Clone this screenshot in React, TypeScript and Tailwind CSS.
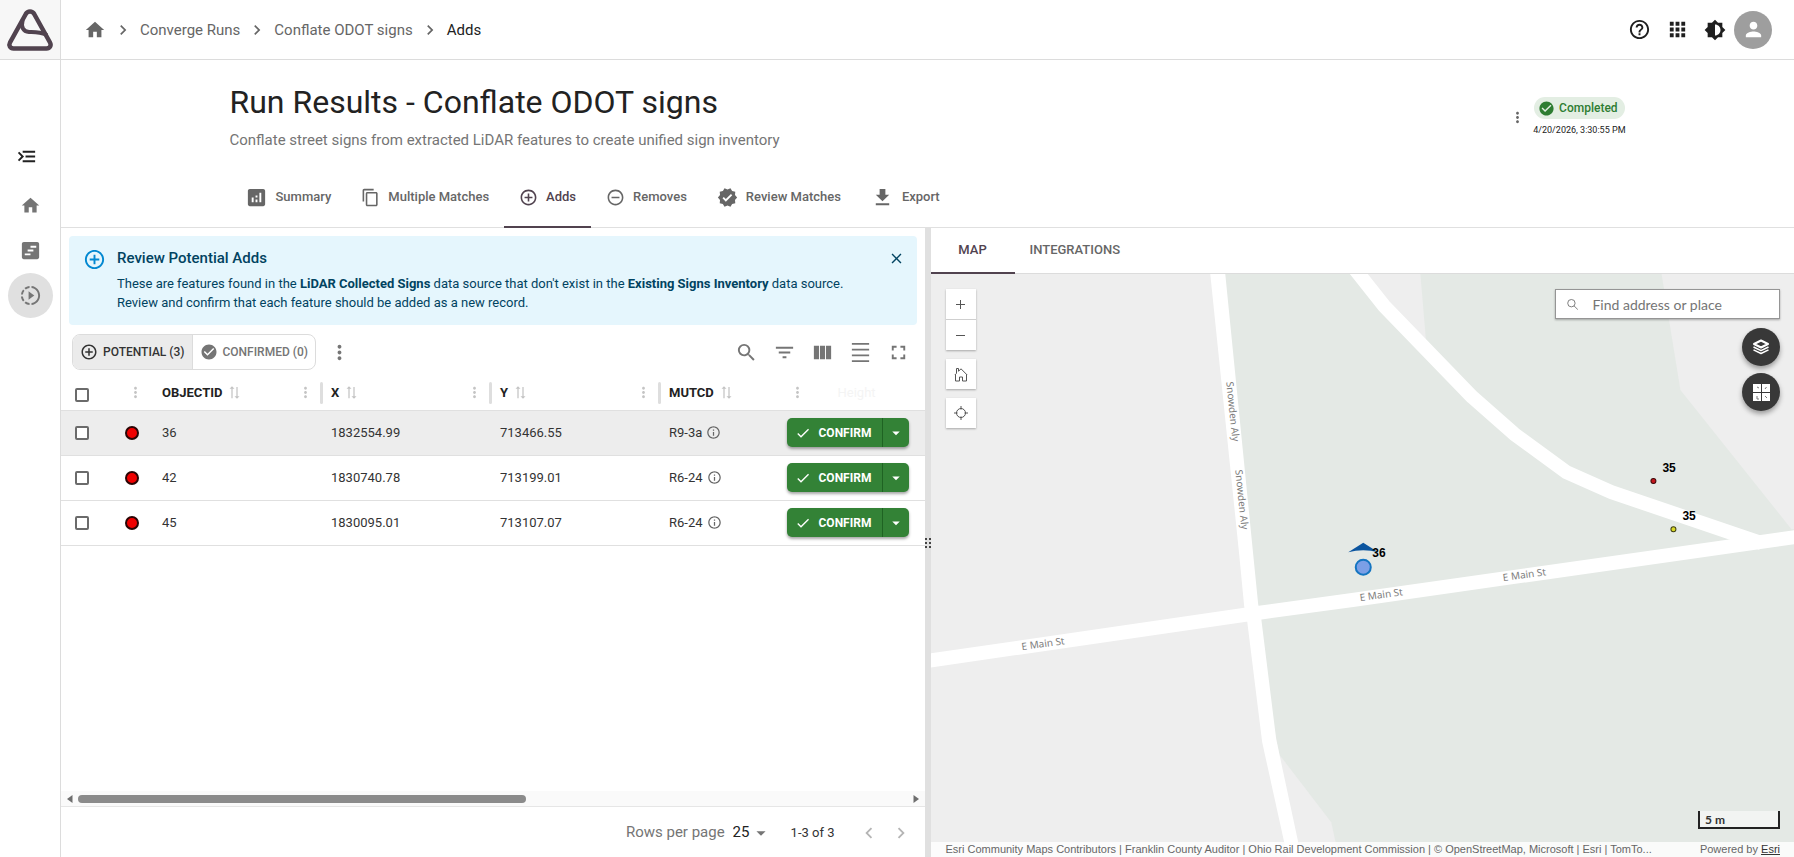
import React from 'react';
import {
  MdAddCircleOutline,
  MdAnalytics,
  MdApps,
  MdArrowDropDown,
  MdBrightness6,
  MdCheck,
  MdCheckCircle,
  MdChevronLeft,
  MdChevronRight,
  MdClose,
  MdContentCopy,
  MdDensitySmall,
  MdDownload,
  MdFilterList,
  MdFullscreen,
  MdHelpOutline,
  MdHome,
  MdInfoOutline,
  MdMenuOpen,
  MdMoreVert,
  MdPerson,
  MdRemoveCircleOutline,
  MdSearch,
  MdSlowMotionVideo,
  MdSyncAlt,
  MdVerified,
  MdViewColumn,
  MdViewTimeline,
} from 'react-icons/md';

const rows = [
  { id: '36', x: '1832554.99', y: '713466.55', mutcd: 'R9-3a' },
  { id: '42', x: '1830740.78', y: '713199.01', mutcd: 'R6-24' },
  { id: '45', x: '1830095.01', y: '713107.07', mutcd: 'R6-24' },
];

const tabs = [
  { label: 'Summary', icon: MdAnalytics, size: 23 },
  { label: 'Multiple Matches', icon: MdContentCopy, size: 19 },
  { label: 'Adds', icon: MdAddCircleOutline, size: 19 },
  { label: 'Removes', icon: MdRemoveCircleOutline, size: 19 },
  { label: 'Review Matches', icon: MdVerified, size: 21 },
  { label: 'Export', icon: MdDownload, size: 23 },
];

const Logo = () => (
  <svg width="48" height="44" viewBox="0 0 48 44" fill="none" stroke="#51434f" strokeWidth="4.500" strokeLinejoin="round" strokeLinecap="round">
    <path d="M19.800 6c1.900-3.200 6.500-3.200 8.400 0L44 34.500c1.600 3-.2 6-3.500 6h-33c-3.300 0-5.100-3-3.500-6z" />
    <path d="M16.500 13c-1.500 6 .5 10.500 6.500 11 6 .3 11 .2 17 2.500" strokeWidth="4" />
  </svg>
);

const Sidebar = () => (
  <aside className="flex w-[61px] shrink-0 flex-col border-r border-[#dcdcdc] bg-white">
    <a href="#" aria-label="Aurora home" className="flex h-[60px] items-center justify-center border-b border-[#dcdcdc] bg-[#f7f7f7]">
      <Logo />
    </a>
    <nav className="mt-[74px] flex flex-col items-center text-[#757575]">
      <button aria-label="Expand menu" className="mb-[4px] flex h-[45px] w-[53px] items-center justify-center self-start text-[#222]">
        <MdMenuOpen size={23} className="-scale-x-100" />
      </button>
      <a href="#" aria-label="Home" className="flex size-[45px] items-center justify-center">
        <MdHome size={21} />
      </a>
      <a href="#" aria-label="Timeline" className="flex size-[45px] items-center justify-center">
        <MdViewTimeline size={23} />
      </a>
      <a href="#" aria-label="Runs" className="flex size-[45px] items-center justify-center rounded-full bg-[#e0e0e0]">
        <MdSlowMotionVideo size={23} />
      </a>
    </nav>
  </aside>
);

const TopBar = () => (
  <header className="flex h-[60px] shrink-0 items-center justify-between border-b border-[#dcdcdc] pr-[22px] pl-[23px]">
    <nav aria-label="Breadcrumb" className="flex items-center pt-px text-[15px] text-[#666]">
      <a href="#" aria-label="Home">
        <MdHome size={22} />
      </a>
      <MdChevronRight size={20} className="mx-[7px]" />
      <a href="#">Converge Runs</a>
      <MdChevronRight size={20} className="mx-[7px]" />
      <a href="#">Conflate ODOT signs</a>
      <MdChevronRight size={20} className="mx-[7px]" />
      <span className="text-[#222]">Adds</span>
    </nav>
    <div className="flex items-center text-[#1f1f1f]">
      <button aria-label="Help" className="flex w-[38px] justify-center">
        <MdHelpOutline size={23} />
      </button>
      <button aria-label="Apps" className="flex w-[38px] justify-center">
        <MdApps size={23} />
      </button>
      <button aria-label="Toggle theme" className="flex w-[38px] justify-center">
        <MdBrightness6 size={22} />
      </button>
      <button aria-label="Account" className="flex size-[38px] items-center justify-center rounded-full bg-[#9e9e9e] text-white">
        <MdPerson size={23} />
      </button>
    </div>
  </header>
);

const RunHeader = () => (
  <section className="shrink-0 border-b border-[#e0e0e0]">
    <div className="mx-auto max-w-[1396px]">
      <div className="flex justify-between pt-[22px]">
        <div>
          <h1 className="text-[32px] leading-[40px] text-[#222]">Run Results - Conflate ODOT signs</h1>
          <p className="mt-[6px] text-[15px] leading-[24px] text-[#757575]">
            Conflate street signs from extracted LiDAR features to create unified sign inventory
          </p>
        </div>
        <div className="flex items-center gap-[7px] self-start pt-[15px]">
          <button aria-label="Run actions" className="text-[#666]">
            <MdMoreVert size={17} />
          </button>
          <div className="flex flex-col items-center">
            <span className="flex h-[22px] items-center gap-[4px] rounded-full bg-[#e3eee3] pr-[7px] pl-[4px] text-[12px] font-medium text-[#2e7d32]">
              <MdCheckCircle size={17} />
              Completed
            </span>
            <time className="mt-[3px] text-[9px] leading-[16px] text-[#222]">4/20/2026, 3:30:55 PM</time>
          </div>
        </div>
      </div>
      <div role="tablist" className="mt-[16px] -mb-px flex h-[60px]">
        {tabs.map(({ label, icon: Icon, size }) => (
          <button
            key={label}
            role="tab"
            aria-selected={label === 'Adds'}
            className={`flex items-center gap-[8px] border-b-2 px-[15px] text-[13px] font-medium ${
              label === 'Adds' ? 'border-[#51434f] text-[#51434f]' : 'border-transparent text-[#666]'
            }`}
          >
            <Icon size={size} />
            {label}
          </button>
        ))}
      </div>
    </div>
  </section>
);

const ReviewAlert = () => (
  <div role="status" className="mx-[8px] mt-[8px] flex rounded-[4px] bg-[#e5f6fd] pt-[11px] pr-[12px] pb-[13px] pl-[14px] text-[#014361]">
    <MdAddCircleOutline size={23} className="mt-px mr-[11px] shrink-0 text-[#0288d1]" />
    <div className="flex-1">
      <h2 className="mb-[5px] text-[15px] leading-[22px] font-medium">Review Potential Adds</h2>
      <p className="text-[13px] leading-[19px]">
        These are features found in the <b>LiDAR Collected Signs</b> data source that don't exist in the{' '}
        <b>Existing Signs Inventory</b> data source.
        <br />
        Review and confirm that each feature should be added as a new record.
      </p>
    </div>
    <button aria-label="Dismiss" className="mt-[3px] self-start">
      <MdClose size={17} />
    </button>
  </div>
);

const TableToolbar = () => (
  <div className="flex items-center justify-between pt-[8px] pr-[7px] pl-[11px] text-[#757575]">
    <div className="flex items-center">
      <div className="flex h-[36px] overflow-hidden rounded-[8px] border border-[#dcdcdc] text-[12px] font-medium">
        <button aria-pressed="true" className="flex items-center gap-[5px] border-r border-[#dcdcdc] bg-[#ebebeb] px-[7px] text-[#333]">
          <MdAddCircleOutline size={18} />
          POTENTIAL (3)
        </button>
        <button aria-pressed="false" className="flex items-center gap-[5px] px-[7px]">
          <MdCheckCircle size={18} />
          CONFIRMED (0)
        </button>
      </div>
      <button aria-label="More actions" className="ml-[12px]">
        <MdMoreVert size={23} />
      </button>
    </div>
    <div className="flex">
      {[
        { label: 'Search', icon: MdSearch },
        { label: 'Filters', icon: MdFilterList },
        { label: 'Columns', icon: MdViewColumn },
        { label: 'Density', icon: MdDensitySmall },
        { label: 'Full screen', icon: MdFullscreen },
      ].map(({ label, icon: Icon }) => (
        <button key={label} aria-label={label} className="flex h-[38px] w-[38px] items-center justify-center">
          <Icon size={23} />
        </button>
      ))}
    </div>
  </div>
);

const Check = ({ label }: { label: string }) => (
  <input
    type="checkbox"
    aria-label={label}
    className="block size-[14px] appearance-none rounded-[2px] border-2 border-[#6b6b6b] bg-white checked:bg-[#6b6b6b]"
  />
);

const ColumnHead = ({ label, resize }: { label: string; resize?: boolean }) => (
  <th className="p-0 pt-[5px] pl-[8px] text-left font-bold">
    <div className="flex items-center">
      {label}
      <MdSyncAlt size={15} className="ml-[5px] rotate-90 text-[#c4c4c4]" />
      {resize && (
        <>
          <MdMoreVert size={17} className="ml-auto text-[#c4c4c4]" />
          <span className="ml-[6px] h-[22px] w-[3px] rounded-full bg-[#dedede]" />
        </>
      )}
    </div>
  </th>
);

const ResultsTable = () => (
  <table className="w-full table-fixed border-collapse text-[13px] text-[#333]">
    <colgroup>
      <col className="w-[40px]" />
      <col className="w-[53px]" />
      <col className="w-[169px]" />
      <col className="w-[169px]" />
      <col className="w-[169px]" />
      <col />
      <col className="w-[146px]" />
    </colgroup>
    <thead>
      <tr className="h-[39px] border-b border-[#e0e0e0] text-[13px] text-[#222]">
        <th className="p-0 pt-[10px] pl-[14px]">
          <Check label="Select all" />
        </th>
        <th className="p-0 pt-[5px]">
          <MdMoreVert size={17} className="ml-[26px] text-[#c4c4c4]" />
        </th>
        <ColumnHead label="OBJECTID" resize />
        <ColumnHead label="X" resize />
        <ColumnHead label="Y" resize />
        <ColumnHead label="MUTCD" />
        <th className="p-0 pt-[5px] text-left font-normal">
          <div className="flex items-center pl-[10px]">
            <MdMoreVert size={17} className="text-[#c4c4c4]" />
            <span className="ml-[32px] text-[#f4f4f4]">Height</span>
          </div>
        </th>
      </tr>
    </thead>
    <tbody>
      {rows.map((row, i) => (
        <tr key={row.id} className={`h-[45px] border-b border-[#e0e0e0] ${i === 0 ? 'bg-[#ededed]' : ''}`}>
          <td className="p-0 pl-[14px]">
            <Check label={`Select ${row.id}`} />
          </td>
          <td className="p-0 pl-[24px]">
            <span className="block size-[14px] rounded-full border-2 border-[#2a0505] bg-[#f00000]" />
          </td>
          <td className="p-0 pl-[8px]">{row.id}</td>
          <td className="p-0 pl-[8px]">{row.x}</td>
          <td className="p-0 pl-[8px]">{row.y}</td>
          <td className="p-0 pl-[8px]">
            <span className="flex items-center gap-[4px]">
              {row.mutcd}
              <MdInfoOutline size={15} className="text-[#666]" />
            </span>
          </td>
          <td className="p-0 pl-[8px]">
            <div className="flex h-[29px] w-[122px] rounded-[5px] bg-[#338236] text-[12px] font-bold text-white shadow-[0_2px_3px_rgba(0,0,0,0.35)]">
              <button className="flex flex-1 items-center gap-[8px] border-r border-[#1f6323] pl-[8px]">
                <MdCheck size={16} />
                CONFIRM
              </button>
              <button aria-label="More confirm options" className="flex w-[26px] items-center justify-center">
                <MdArrowDropDown size={18} />
              </button>
            </div>
          </td>
        </tr>
      ))}
    </tbody>
  </table>
);

const TableFooter = () => (
  <div className="mt-auto">
    <div className="flex h-[16px] items-center border-b border-[#e6e6e6] bg-[#fafafa] px-[6px] text-[#6e6e6e]">
      <svg width="6" height="8" viewBox="0 0 6 8" fill="currentColor">
        <path d="M5.500 0v8L0 4z" />
      </svg>
      <div className="mx-[5px] flex-1">
        <div className="h-[8px] w-[54%] rounded-full bg-[#8b8b8b]" />
      </div>
      <svg width="6" height="8" viewBox="0 0 6 8" fill="currentColor">
        <path d="M.5 0v8L6 4z" />
      </svg>
    </div>
    <div className="flex h-[50px] items-center justify-end pt-px pr-[8px] text-[15px] text-[#757575]">
      <label htmlFor="rows-per-page">Rows per page</label>
      <div className="relative ml-[8px] flex items-center">
        <select id="rows-per-page" defaultValue="25" className="w-[42px] appearance-none text-[15px] text-[#222]">
          <option>25</option>
          <option>50</option>
          <option>100</option>
        </select>
        <MdArrowDropDown size={22} className="pointer-events-none absolute right-[3px]" />
      </div>
      <span className="ml-[16px] text-[13px] text-[#333]">1-3 of 3</span>
      <button aria-label="Previous page" className="ml-[18px] flex w-[32px] justify-center text-[#b5b5b5]">
        <MdChevronLeft size={22} />
      </button>
      <button aria-label="Next page" className="flex w-[32px] justify-center text-[#b5b5b5]">
        <MdChevronRight size={22} />
      </button>
    </div>
  </div>
);

const Basemap = () => (
  <svg className="absolute inset-0 size-full" viewBox="0 1 863 583" preserveAspectRatio="xMinYMin slice" aria-label="Map">
    <rect width="870" height="590" fill="#eeeeee" />
    {/* parcels */}
    <path d="M286 0H870V590H370L320 340z" fill="#e4e9e5" />
    <path d="M425 0h64l6 71-36-37z" fill="#eeeeee" />
    <path d="M730 0l19 117 111 139h10V0z" fill="#eeeeee" />
    <path d="M345 478l6 7 49 64 9 41h-50z" fill="#eeeeee" />
    {/* roads */}
    <path d="M422-6l31 39 88 91 42 37 52 38 45 20 150 51" stroke="#ffffff" strokeWidth="14" strokeLinejoin="round" fill="none" />
    <path
      d="M279 0L308 281L313 333L316 348L331 469L353 569L357 590H372L367 569L345 466L330 345L327 331L322 281L294 0z"
      fill="#ffffff"
    />
    <path d="M-2 387.500L321 340.500L423 326.500L870 263" stroke="#ffffff" strokeWidth="14" fill="none" />
    <g fontFamily="'Noto Sans', sans-serif" fontSize="10" fill="#7d7d7d">
      <text transform="translate(91 377) rotate(-8)">E Main St</text>
      <text transform="translate(429 328) rotate(-8)">E Main St</text>
      <text transform="translate(572 308) rotate(-8)">E Main St</text>
      <text transform="translate(295 109) rotate(84)">Snowden Aly</text>
      <text transform="translate(304 197) rotate(84)">Snowden Aly</text>
    </g>
    {/* features */}
    <circle cx="722" cy="208" r="2.500" fill="#c4161c" stroke="#3d0a0a" />
    <circle cx="742" cy="256" r="2.500" fill="#d9d926" stroke="#3f3f10" />
    <path d="M432 269.500l15 9.500q-15-4-30 0z" fill="#0b559f" />
    <circle cx="432" cy="294" r="7.500" fill="#7b9fe6" stroke="#1475c1" strokeWidth="2" />
    <g fontFamily="'Liberation Sans', sans-serif" fontWeight="700" fontSize="12" fill="#000">
      <text x="731" y="199">35</text>
      <text x="751" y="247">35</text>
      <text x="441" y="284">36</text>
    </g>
  </svg>
);

const MapView = () => (
  <div className="relative flex-1 overflow-hidden">
    <Basemap />
    <div className="absolute top-[15px] left-[15px] flex flex-col gap-[9px] text-[#555]">
      <div className="bg-white shadow-[0_1px_2px_rgba(0,0,0,0.3)]">
        <button aria-label="Zoom in" className="flex h-[31px] w-[30px] items-center justify-center border-b border-[#cfcfcf]">
          <svg width="9" height="9" viewBox="0 0 9 9" stroke="currentColor">
            <path d="M4.500 0v9M0 4.500h9" />
          </svg>
        </button>
        <button aria-label="Zoom out" className="flex size-[30px] items-center justify-center">
          <svg width="9" height="9" viewBox="0 0 9 9" stroke="currentColor">
            <path d="M0 4.500h9" />
          </svg>
        </button>
      </div>
      <button aria-label="Default view" className="flex size-[30px] items-center justify-center bg-white shadow-[0_1px_2px_rgba(0,0,0,0.3)]">
        <svg width="14" height="15" viewBox="0 0 14 15" fill="none" stroke="currentColor">
          <path d="M.8 8L2.500 6.300V1.500h2v2.800L7 1.800 13.200 8M1.500 7.500V14h4v-4h3v4h4V7.500" />
        </svg>
      </button>
      <button aria-label="Find my location" className="flex size-[30px] items-center justify-center bg-white shadow-[0_1px_2px_rgba(0,0,0,0.3)]">
        <svg width="14" height="14" viewBox="0 0 14 14" fill="none" stroke="currentColor">
          <circle cx="7" cy="7" r="4.500" />
          <path d="M7 0v3.500M7 10.500V14M0 7h3.500M10.500 7H14" />
        </svg>
      </button>
    </div>
    <div className="absolute top-[15px] right-[14px] flex flex-col items-end">
      <label className="flex h-[30px] w-[225px] items-center border border-[#959595] bg-white pl-[11px] shadow-[0_1px_2px_rgba(0,0,0,0.3)]">
        <svg width="13" height="13" viewBox="0 0 13 13" fill="none" stroke="#6e6e6e">
          <circle cx="5" cy="5" r="4.200" />
          <path d="M8 8l4.500 4.500" />
        </svg>
        <input
          type="text"
          aria-label="Find address or place"
          placeholder="Find address or place"
          className="ml-[14px] w-full min-w-0 bg-transparent font-['Lato',sans-serif] text-[14px] outline-none placeholder:text-[#757575]"
        />
      </label>
      <button aria-label="Layers" className="mt-[9px] flex size-[38px] items-center justify-center rounded-full bg-[#383838] shadow-[0_3px_5px_rgba(0,0,0,0.35)]">
        <svg width="18" height="16" viewBox="0 0 18 16" fill="none" stroke="#fff" strokeWidth="1.500" strokeLinejoin="round">
          <path d="M9 1.500L16 5 9 8.500 2 5z" strokeWidth="2" />
          <path d="M1.500 8L9 11.700 16.500 8M1.500 10.800L9 14.500l7.500-3.700" />
        </svg>
      </button>
      <button aria-label="Basemaps" className="mt-[7px] flex size-[38px] items-center justify-center rounded-full bg-[#383838] shadow-[0_3px_5px_rgba(0,0,0,0.35)]">
        <svg width="17" height="17" viewBox="0 0 17 17">
          <path d="M0 0h8v8H0zM9 0h8v8H9zM0 9h8v8H0zM9 9h8v8H9z" fill="#fff" />
          <path d="M4 3l2 1M12 5l1.500-2M4 12v3h2M12 12l2 2" fill="none" stroke="#777" />
        </svg>
      </button>
    </div>
    <div className="absolute right-[14px] bottom-[28px] h-[18px] w-[82px] border-2 border-t-0 border-[#222] bg-white/50 pl-[5px] font-['Lato',sans-serif] text-[12px] leading-[18px] font-bold text-[#333]">
      5 m
    </div>
    <div className="absolute inset-x-0 bottom-0 flex h-[15px] items-center justify-between bg-white/80 pr-[14px] pl-[15px] font-['Liberation_Sans',sans-serif] text-[11px] leading-[15px] whitespace-nowrap text-[#666]">
      <span>
        Esri Community Maps Contributors | Franklin County Auditor | Ohio Rail Development Commission | © OpenStreetMap, Microsoft | Esri | TomTo...
      </span>
      <span>
        Powered by{' '}
        <a href="#" className="text-[#333] underline">
          Esri
        </a>
      </span>
    </div>
  </div>
);

const App: React.FC = () => {
  return (
    <div className="flex min-h-screen bg-white font-['Roboto',sans-serif]">
      <Sidebar />
      <div className="flex min-w-0 flex-1 flex-col">
        <TopBar />
        <RunHeader />
        <main className="grid flex-1 grid-cols-[minmax(0,1fr)_6px_minmax(0,1fr)]">
          <section className="flex min-w-0 flex-col">
            <ReviewAlert />
            <TableToolbar />
            <ResultsTable />
            <TableFooter />
          </section>
          <div role="separator" className="flex items-center justify-center bg-[#e0e0e0]">
            <svg width="6" height="10" viewBox="0 0 6 10" fill="#444">
              <path d="M0 0h2v2H0zM4 0h2v2H4zM0 4h2v2H0zM4 4h2v2H4zM0 8h2v2H0zM4 8h2v2H4z" />
            </svg>
          </div>
          <section className="flex min-w-0 flex-col">
            <div role="tablist" className="flex h-[46px] shrink-0 border-b border-[#dcdcdc] text-[13px] font-medium">
              <button role="tab" aria-selected="true" className="-mb-px w-[84px] border-b-2 border-[#51434f] text-[#51434f]">
                MAP
              </button>
              <button role="tab" aria-selected="false" className="-mb-px border-b-2 border-transparent px-[15px] text-[#666]">
                INTEGRATIONS
              </button>
            </div>
            <MapView />
          </section>
        </main>
      </div>
    </div>
  );
};

export default App;
